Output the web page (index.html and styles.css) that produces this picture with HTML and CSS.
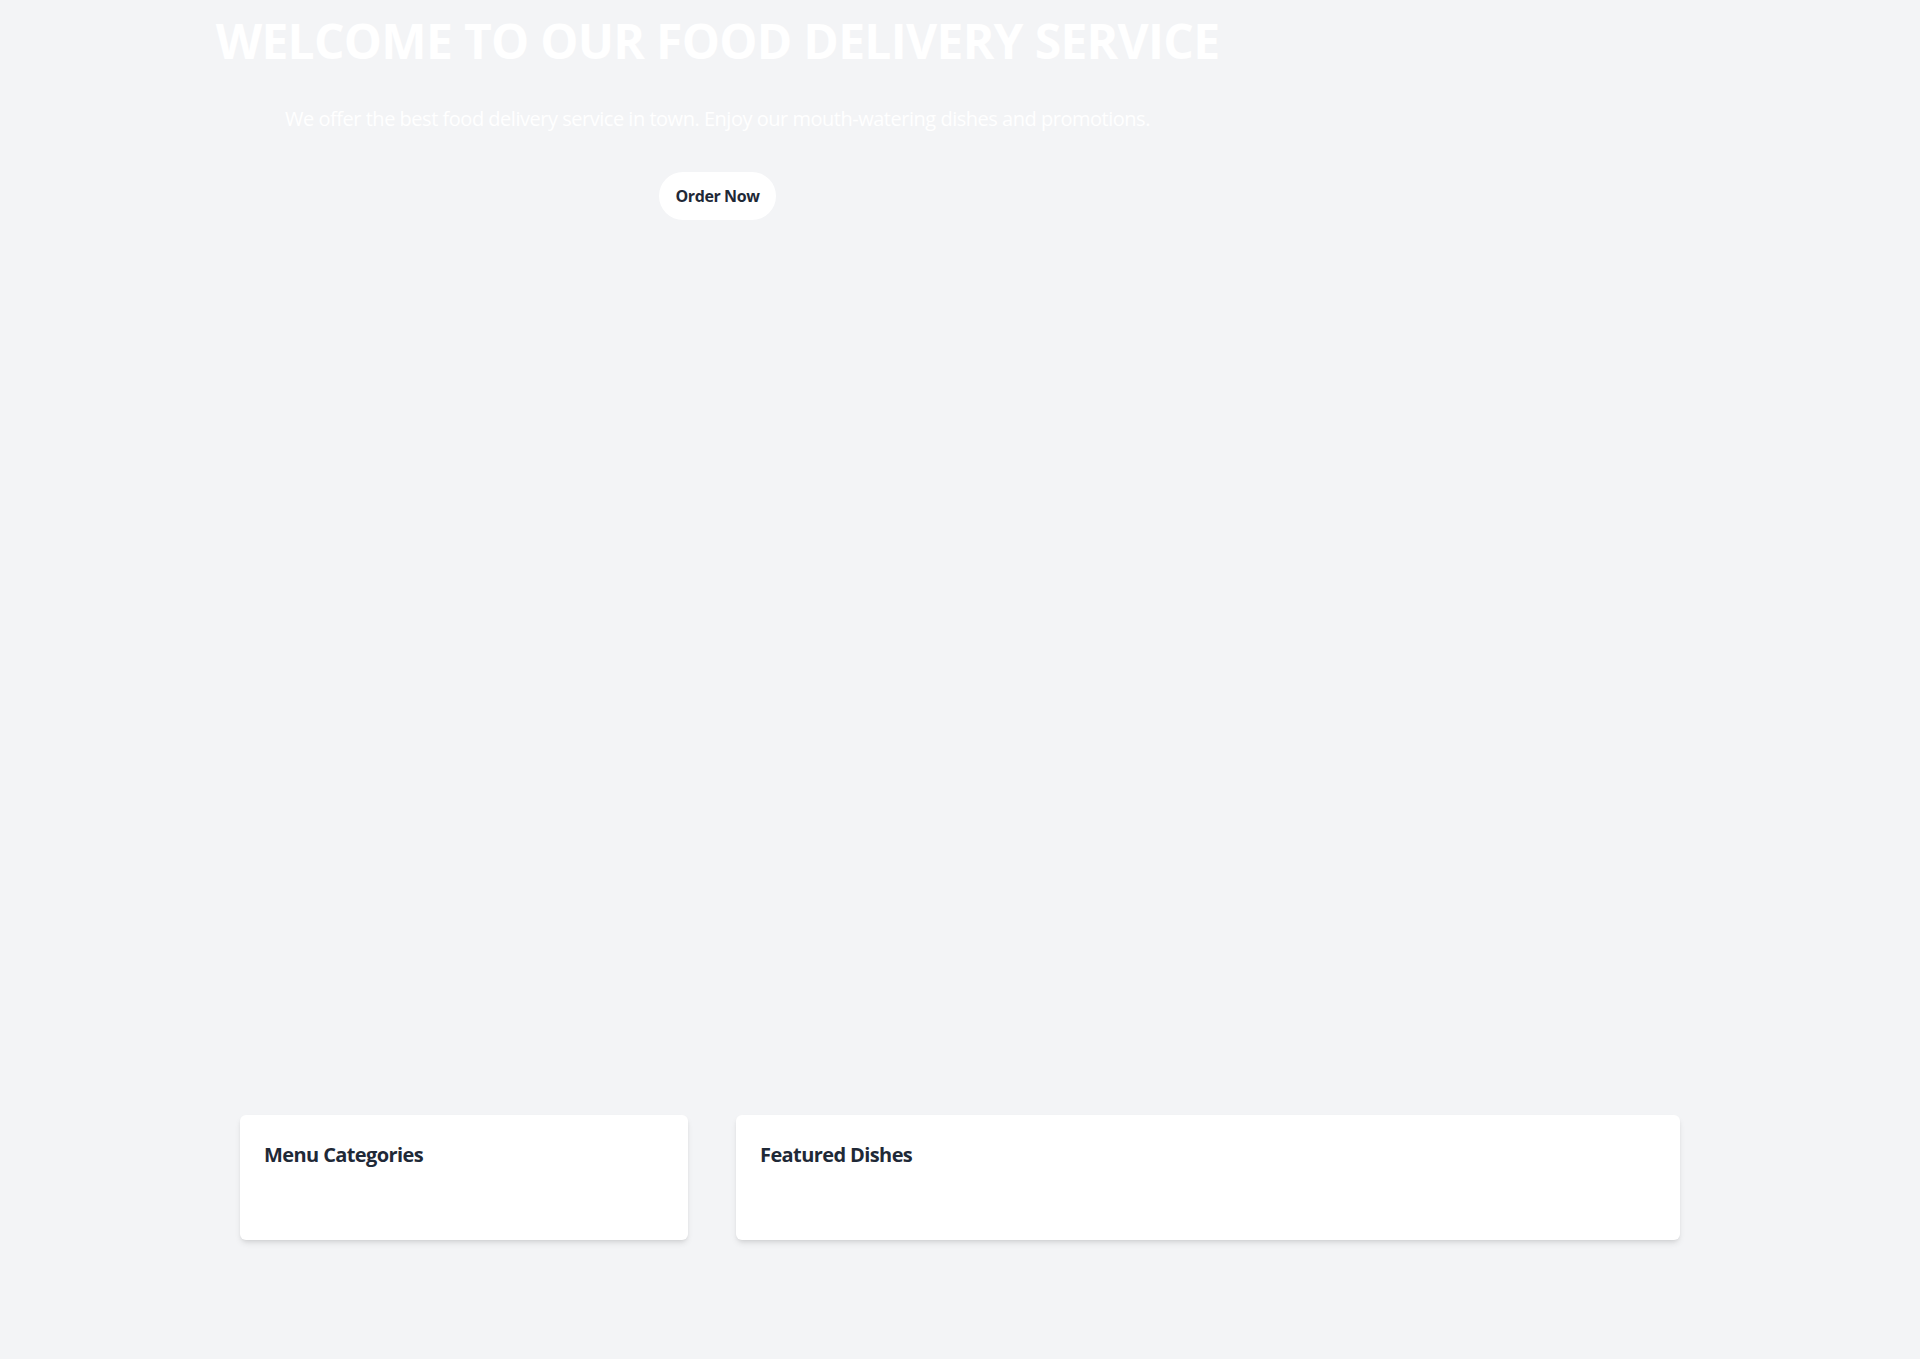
FILE: index.html
```html
<!DOCTYPE html>
<html lang="en">
<head>
<meta charset="utf-8">
<title>Food Delivery</title>
<link rel="stylesheet" href="styles.css">
</head>
<body>
<main class="page">
  <section class="hero">
    <h1 class="hero-title">WELCOME TO OUR FOOD DELIVERY SERVICE</h1>
    <p class="hero-text">We offer the best food delivery service in town. Enjoy our mouth-watering dishes and promotions.</p>
    <a class="hero-btn" href="#">Order Now</a>
  </section>
  <section class="content">
    <div class="card card-categories">
      <h2 class="card-title">Menu Categories</h2>
      <ul class="card-list"></ul>
    </div>
    <div class="card card-featured">
      <h2 class="card-title">Featured Dishes</h2>
      <div class="card-list"></div>
    </div>
  </section>
</main>
</body>
</html>
```
FILE: styles.css
```css
html, body {
  margin: 0;
  padding: 0;
}
body {
  background: #f3f4f6;
  font-family: "Open Sans", "Noto Sans", "Liberation Sans", sans-serif;
  color: #1f2937;
}
.page {
  min-height: 1359px;
}
.hero {
  width: 1435px;
  height: 1067px;
  box-sizing: border-box;
  padding-top: 17px;
  text-align: center;
}
.hero-title {
  margin: 0;
  font-size: 48px;
  line-height: 48px;
  font-weight: 700;
  letter-spacing: -0.7px;
  color: #ffffff;
  white-space: nowrap;
}
.hero-text {
  margin: 40px 0 0;
  font-size: 20px;
  line-height: 28px;
  letter-spacing: -0.48px;
  color: #ffffff;
}
.hero-btn {
  display: inline-block;
  margin-top: 39px;
  padding: 12px 16px;
  background: #ffffff;
  border-radius: 9999px;
  color: #1f2937;
  font-size: 16px;
  line-height: 24px;
  font-weight: 700;
  letter-spacing: -0.4px;
  text-decoration: none;
}
.content {
  max-width: 1440px;
  margin: 48px auto 0;
  display: grid;
  grid-template-columns: repeat(3, 1fr);
  gap: 48px;
}
.card {
  background: #ffffff;
  border-radius: 6px;
  box-shadow: 0 4px 6px -1px rgba(0,0,0,0.1), 0 2px 4px -2px rgba(0,0,0,0.1);
  padding: 26px 24px 24px;
  min-height: 125px;
  box-sizing: border-box;
}
.card-featured {
  grid-column: span 2;
}
.card-title {
  margin: 0 0 16px;
  font-size: 20px;
  line-height: 28px;
  font-weight: 700;
  letter-spacing: -0.6px;
  color: #1f2937;
}
.card-list {
  margin: 0;
  padding: 0;
  list-style: none;
}
```
